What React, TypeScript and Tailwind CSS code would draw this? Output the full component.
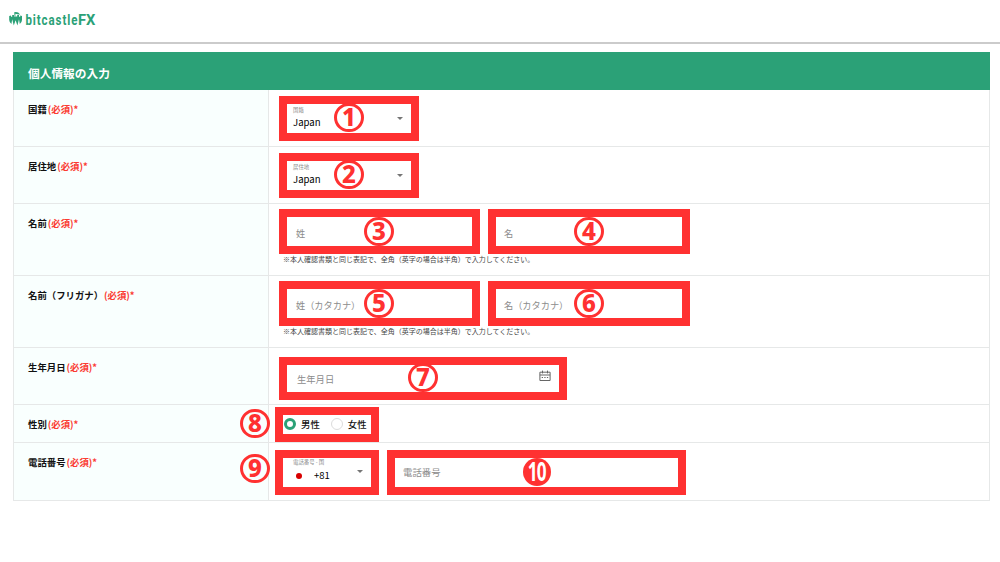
import type { ReactNode } from "react";

function Logo() {
  return (
    <svg width="90" height="18" viewBox="0 0 90 18" aria-label="bitcastleFX">
      <g fill="#2ba177">
        <path d="M0.2 6 L2 5.4 V6.8 H3.2 V5 H5 V6.4 H8.2 V5 H10 V6.8 H11.2 V5.4 L13 6 V10 Q12.8 12.8 10.8 14 L10 9.2 L8.4 15.6 L6.6 10.2 L4.8 15.6 L3.2 9.2 L2.4 14 Q0.4 12.8 0.2 10Z" />
        <path d="M5.2 2.2 Q8.8 1.2 11.2 4.4 Q8.6 4.6 6.4 3.8 V6.4 H5.6Z" />
      </g>
      <g fill="#2ba177" fontFamily="Roboto, sans-serif" transform="scale(0.82 1)">
        <text x="20" y="14.8" fontWeight="700" fontSize="14" textLength="63.5" lengthAdjust="spacing">bitcastle</text>
        <text x="84.2" y="14.8" fontWeight="700" fontSize="15.4" textLength="21.2" lengthAdjust="spacingAndGlyphs">FX</text>
      </g>
    </svg>
  );
}

function Num({ children, className }: { children: ReactNode; className: string }) {
  return (
    <span className={`absolute flex h-[29px] w-[30px] items-center justify-center rounded-full border-[3px] border-[#ff3131] pb-[2px] font-['Noto_Sans',sans-serif] text-[24px] leading-none font-extrabold text-[#ff3131] ${className}`}>
      {children}
    </span>
  );
}

function Box({ children, className }: { children?: ReactNode; className: string }) {
  return <div className={`relative flex shrink-0 border-8 border-[#ff3131] bg-white ${className}`}>{children}</div>;
}

function Row({ label, height, cell, children }: { label: string; height: string; cell: string; children: ReactNode }) {
  return (
    <div className={`flex border-b border-[#e6e8e8] ${height}`}>
      <div className="w-[254px] shrink-0 bg-[#f9fffe] pt-[11px] pl-[14px] text-[9.4px] leading-4 font-bold whitespace-nowrap text-[#111]">
        {label}
        <span className="ml-px text-[#fb3b32]">(必須)*</span>
      </div>
      <div className={`relative flex-1 border-l border-[#e6e8e8] ${cell}`}>{children}</div>
    </div>
  );
}

function Caret({ className }: { className: string }) {
  return (
    <svg className={className} width="6" height="3" viewBox="0 0 6 3">
      <path d="M0 0H6L3 3Z" fill="#757575" />
    </svg>
  );
}

function CountrySelect({ label, num }: { label: string; num: string }) {
  return (
    <Box className="h-[45px] w-[140px] justify-between pt-[2px] pr-[8px] pl-[6px]">
      <div>
        <div className="text-[5.4px] leading-[8px] text-[#8c8c8c]">{label}</div>
        <div className="mt-px text-[9.6px] leading-[15px] text-black">Japan</div>
      </div>
      <Caret className="mt-[11px]" />
      <Num className="top-[-1px] left-[47px]">{num}</Num>
    </Box>
  );
}

function NameFields({ first, second, nums }: { first: string; second: string; nums: [string, string] }) {
  return (
    <>
      <div className="flex gap-2">
        <Box className="h-[45px] w-[201px] items-center pt-[4px] pl-[9px] text-[9.2px] text-[#8c8c8c]">
          {first}
          <Num className="top-0 left-[77px]">{nums[0]}</Num>
        </Box>
        <Box className="h-[45px] w-[202px] items-center pt-[4px] pl-[8px] text-[9.2px] text-[#8c8c8c]">
          {second}
          <Num className="top-0 left-[78px]">{nums[1]}</Num>
        </Box>
      </div>
      <p className="pl-[4px] text-[7px] leading-[11px] whitespace-nowrap text-[#444]">
        ※本人確認書類と同じ表記で、全角（英字の場合は半角）で入力してください。
      </p>
    </>
  );
}

function CalendarIcon() {
  return (
    <svg className="mt-[5px]" width="12" height="12" viewBox="0 0 12 12" fill="none" stroke="#666" strokeWidth="1">
      <path d="M0.9 2.2H11.1V10.5H0.9Z M0.9 5H11.1 M3.5 0.6V3.4 M8.5 0.6V3.4" />
      <path d="M2.7 7.5H9.6" strokeDasharray="1.3 1.3" />
    </svg>
  );
}

export default function App() {
  return (
    <div lang="ja" className="h-[562px] w-[1000px] overflow-hidden bg-white font-['Noto_Sans_CJK_JP',sans-serif]">
      <header className="h-[44px] border-b-2 border-[#cbcbcb] pt-[10px] pl-[9px]">
        <Logo />
      </header>
      <main className="mt-2 ml-[13px] w-[977px]">
        <h1 className="h-[38px] bg-[#2ba177] pt-[13px] pl-[15px] text-[11.7px] leading-4 font-bold text-white">個人情報の入力</h1>
        <div className="border-x border-[#e6e8e8]">
          <Row label="国籍" height="h-[57px]" cell="pt-[6px] pl-[10px]">
            <CountrySelect label="国籍" num="1" />
          </Row>
          <Row label="居住地" height="h-[57px]" cell="pt-[6px] pl-[10px]">
            <CountrySelect label="居住地" num="2" />
          </Row>
          <Row label="名前" height="h-[72px]" cell="pt-[5px] pl-[10px]">
            <NameFields first="姓" second="名" nums={["3", "4"]} />
          </Row>
          <Row label="名前（フリガナ）" height="h-[72px]" cell="pt-[5px] pl-[10px]">
            <NameFields first="姓（カタカナ）" second="名（カタカナ）" nums={["5", "6"]} />
          </Row>
          <Row label="生年月日" height="h-[57px]" cell="pt-[9px] pl-[10px]">
            <Box className="h-[43px] w-[288px] justify-between pr-[8px] pl-[10px]">
              <span className="mt-[6px] text-[9.3px] leading-4 text-[#8c8c8c]">生年月日</span>
              <CalendarIcon />
              <Num className="top-[-2px] left-[121px]">7</Num>
            </Box>
          </Row>
          <Row label="性別" height="h-[38px]" cell="pt-[2px] pl-[6px]">
            <Box className="h-[35px] w-[104px] items-center pl-[1px] text-[9.4px] font-medium text-[#111]">
              <span className="mb-px h-[12px] w-[12px] rounded-full border-[3px] border-[#2ba177]" />
              <span className="ml-[5px]">男性</span>
              <span className="mb-px ml-[11px] h-[12px] w-[12px] rounded-full border border-[#dcdcdc]" />
              <span className="ml-[5px]">女性</span>
              <Num className="top-[-6px] left-[-43px]">8</Num>
            </Box>
          </Row>
          <Row label="電話番号" height="h-[58px]" cell="flex gap-2 pt-[7px] pl-[6px]">
            <Box className="h-[45px] w-[104px] justify-between pr-[8px] pl-[10px]">
              <div>
                <div className="text-[5.4px] leading-[8px] whitespace-nowrap text-[#8c8c8c]">電話番号 - 国</div>
                <div className="flex items-center pt-[2px] pl-[3px] text-[9.5px] leading-[15px] text-black">
                  <span className="mr-[12px] h-[6px] w-[6px] rounded-full bg-[#d80000]" />
                  +81
                </div>
              </div>
              <Caret className="mt-[12px]" />
              <Num className="top-[-4px] left-[-43px]">9</Num>
            </Box>
            <Box className="h-[45px] w-[299px] items-center pl-[8px] text-[9.4px] text-[#8c8c8c]">
              電話番号
              <span className="absolute top-0 left-[128px] flex h-[28px] w-[28px] items-center justify-center rounded-full bg-[#ff3131] pb-[2px] font-['Noto_Sans',sans-serif] text-[26px] leading-none font-bold text-white">
                <span className="scale-x-[0.66] tracking-[-1px]">10</span>
              </span>
            </Box>
          </Row>
        </div>
      </main>
    </div>
  );
}
